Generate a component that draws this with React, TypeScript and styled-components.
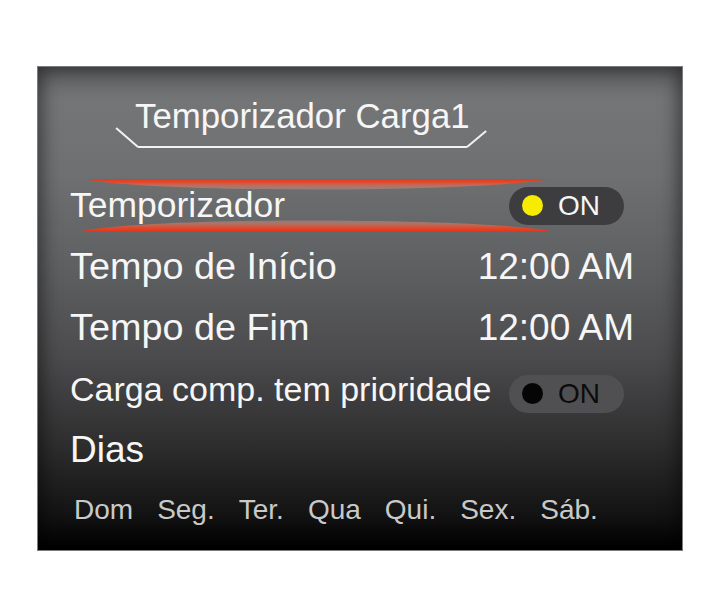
import styled, { createGlobalStyle } from "styled-components";

const GlobalStyle = createGlobalStyle`
  html, body {
    margin: 0;
    padding: 0;
    background: #ffffff;
  }

  body {
    font-family: "Liberation Sans", Arial, sans-serif;
  }
`;

type ToggleTone = "active" | "muted";

const days = ["Dom", "Seg.", "Ter.", "Qua", "Qui.", "Sex.", "Sáb."];

function Toggle({ tone, drop }: { tone: ToggleTone; drop?: boolean }) {
  return (
    <S.Toggle $tone={tone} $drop={drop}>
      <S.Dot $tone={tone} />
      <S.ToggleText $tone={tone}>ON</S.ToggleText>
    </S.Toggle>
  );
}

function Highlight() {
  return (
    <S.Highlight width="468" height="54" viewBox="0 0 468 54">
      <defs>
        <linearGradient id="bandTop" x1="0" y1="1" x2="0" y2="12" gradientUnits="userSpaceOnUse">
          <stop offset="0" stopColor="#e8361c" />
          <stop offset="0.3" stopColor="#e04a2c" />
          <stop offset="1" stopColor="#c9a092" stopOpacity="0.35" />
        </linearGradient>
        <linearGradient id="bandBottom" x1="0" y1="53" x2="0" y2="42" gradientUnits="userSpaceOnUse">
          <stop offset="0" stopColor="#e8361c" />
          <stop offset="0.3" stopColor="#e04a2c" />
          <stop offset="1" stopColor="#c9a092" stopOpacity="0.35" />
        </linearGradient>
      </defs>
      <path d="M0 1 L468 1 C400 14 80 16 0 1 Z" fill="url(#bandTop)" />
      <path d="M0 53 L468 53 C400 40 80 38 0 53 Z" fill="url(#bandBottom)" />
    </S.Highlight>
  );
}

export default function App() {
  return (
    <>
      <GlobalStyle />
      <S.Stage>
        <S.Panel>
          <S.Header>
            <S.TitleFrame>
              <S.TitleText>Temporizador Carga1</S.TitleText>
            </S.TitleFrame>
          </S.Header>

          <S.Row>
            <Highlight />
            <S.Label $size={35.5}>Temporizador</S.Label>
            <Toggle tone="active" />
          </S.Row>

          <S.Row>
            <S.Label $size={37.8}>Tempo de Início</S.Label>
            <S.TimeValue>12:00 AM</S.TimeValue>
          </S.Row>

          <S.Row>
            <S.Label $size={37.8}>Tempo de Fim</S.Label>
            <S.TimeValue>12:00 AM</S.TimeValue>
          </S.Row>

          <S.Row>
            <S.Label $size={34}>Carga comp. tem prioridade</S.Label>
            <Toggle tone="muted" drop />
          </S.Row>

          <S.Row>
            <S.Label $size={37}>Dias</S.Label>
          </S.Row>

          <S.DaysRow>
            {days.map((d) => (
              <S.Day key={d}>{d}</S.Day>
            ))}
          </S.DaysRow>
        </S.Panel>
      </S.Stage>
    </>
  );
}

const S = {
  Stage: styled.div`
    padding: 66px 0 0 37px;
  `,

  Panel: styled.div`
    box-sizing: border-box;
    width: 646px;
    height: 485px;
    padding: 0 48px 0 32px;

    display: flex;
    flex-direction: column;

    border: 1px solid #7c7c7c;
    background: linear-gradient(
      to bottom,
      #616264 0%,
      #747577 7%,
      #6f7072 22%,
      #5e5f61 42%,
      #4b4b4d 60%,
      #2e2e2f 78%,
      #141414 92%,
      #000000 100%
    );
    box-shadow: inset 0 0 18px 4px rgba(0, 0, 0, 0.5);
    color: #f6f6f6;
    overflow: hidden;
  `,

  Header: styled.div`
    height: 108px;
    padding: 31px 0 0 68px;
    box-sizing: border-box;
  `,

  TitleFrame: styled.div`
    position: relative;
    box-sizing: border-box;
    width: 329px;
    padding-bottom: 13px;
    border-bottom: 2px solid #f2f2f2;

    &::before,
    &::after {
      content: "";
      position: absolute;
      height: 2px;
      background: #f2f2f2;
      bottom: -2px;
    }

    &::before {
      width: 29px;
      right: 100%;
      transform-origin: right center;
      transform: rotate(41deg);
    }

    &::after {
      width: 25px;
      left: 100%;
      transform-origin: left center;
      transform: rotate(-40deg);
    }
  `,

  TitleText: styled.div`
    margin-left: -3px;
    font-size: 34.8px;
    line-height: 35px;
    white-space: nowrap;
  `,

  Row: styled.div`
    position: relative;
    height: 61px;
    display: flex;
    align-items: center;
    justify-content: space-between;
    flex-shrink: 0;
  `,

  Highlight: styled.svg`
    position: absolute;
    left: 12px;
    top: 3px;
  `,

  Label: styled.span<{ $size: number }>`
    position: relative;
    font-size: ${(p) => p.$size}px;
    line-height: 1;
    white-space: nowrap;
  `,

  TimeValue: styled.span`
    font-size: 37px;
    line-height: 1;
    white-space: nowrap;
  `,

  Toggle: styled.div<{ $tone: ToggleTone; $drop?: boolean }>`
    box-sizing: border-box;
    width: 115px;
    height: 38px;
    margin-right: 10px;
    margin-top: ${(p) => (p.$drop ? "10px" : "0")};
    padding-left: 13px;

    display: flex;
    align-items: center;
    gap: 15px;

    border-radius: 19px;
    background: ${(p) => (p.$tone === "active" ? "#3d3d3f" : "#505052")};
  `,

  Dot: styled.span<{ $tone: ToggleTone }>`
    width: 21px;
    height: 21px;
    border-radius: 50%;
    background: ${(p) => (p.$tone === "active" ? "#f7ec00" : "#050505")};
  `,

  ToggleText: styled.span<{ $tone: ToggleTone }>`
    font-size: 28px;
    line-height: 1;
    color: ${(p) => (p.$tone === "active" ? "#f6f6f6" : "#0c0c0c")};
  `,

  DaysRow: styled.div`
    height: 59px;
    padding-left: 4px;
    display: flex;
    align-items: center;
    gap: 24px;
  `,

  Day: styled.span`
    font-size: 28px;
    line-height: 1;
    color: #c9c9c9;
  `,
};
